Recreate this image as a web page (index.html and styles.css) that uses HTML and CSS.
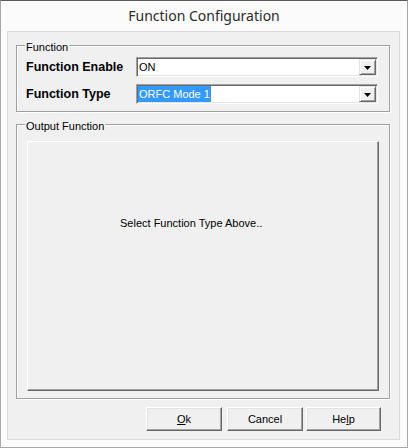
FILE: index.html
```html
<!DOCTYPE html>
<html>
<head>
<meta charset="utf-8">
<link rel="stylesheet" href="styles.css">
</head>
<body>
<div class="window">
  <div class="titlebar">Function Configuration</div>
  <div class="client">
    <div class="group g1">
      <div class="legend">Function</div>
      <div class="row">
        <span class="label">Function Enable</span>
        <div class="combo">
          <div class="value">ON</div>
          <div class="drop"><svg width="7" height="4" viewBox="0 0 7 4"><path d="M0 0h7L3.5 4z" fill="#000"/></svg></div>
        </div>
      </div>
      <div class="row row2">
        <span class="label">Function Type</span>
        <div class="combo">
          <div class="value"><span class="sel">ORFC Mode 1</span></div>
          <div class="drop"><svg width="7" height="4" viewBox="0 0 7 4"><path d="M0 0h7L3.5 4z" fill="#000"/></svg></div>
        </div>
      </div>
    </div>
    <div class="group g2">
      <div class="legend">Output Function</div>
      <div class="panel">Select Function Type Above..</div>
    </div>
    <div class="buttons">
      <button class="btn btn-ok"><u>O</u>k</button>
      <button class="btn btn-cancel">Cancel</button>
      <button class="btn btn-help">He<u>l</u>p</button>
    </div>
  </div>
</div>
</body>
</html>
```
FILE: styles.css
```css
* { box-sizing: border-box; }
body {
  margin: 0;
  font-family: "Liberation Sans", Arial, sans-serif;
  font-size: 11px;
  color: #000;
}
.window {
  width: 408px;
  height: 448px;
  border: 1px solid #a8a8a8;
  border-top-color: #5a5a5a;
  background: #fbfbfb;
  display: flex;
  flex-direction: column;
}
.titlebar {
  height: 30px;
  line-height: 30px;
  text-align: center;
  font-family: "Noto Sans", sans-serif;
  font-size: 14px;
  color: #2b2b2b;
}
.client {
  flex: 1;
  margin: 0 7px 7px 6px;
  border: 1px solid #dadada;
  background: #f0f0f0;
  padding: 13px 0 0 8px;
}
.group {
  width: 374px;
  border: 1px solid #a0a0a0;
  box-shadow: inset 1px 1px 0 #fff, 1px 1px 0 #fff;
}
.legend {
  display: table;
  margin: -5px 0 3px 8px;
  padding: 0 1px;
  line-height: 13px;
  background: #f0f0f0;
}
.g1 { padding-bottom: 7px; }
.row {
  display: flex;
  align-items: center;
  height: 20px;
  margin-left: 9px;
}
.row2 { margin-top: 7px; }
.label {
  width: 110px;
  font-weight: bold;
  font-size: 12.5px;
}
.combo {
  width: 242px;
  height: 20px;
  display: flex;
  background: #fff;
  border-top: 1px solid #a0a0a0;
  border-left: 1px solid #a0a0a0;
  border-right: 1px solid #fff;
  border-bottom: 1px solid #fff;
  box-shadow: inset 1px 1px 0 #696969, inset -1px -1px 0 #e3e3e3;
  padding: 1px;
}
.value {
  flex: 1;
  height: 16px;
  line-height: 16px;
  padding-left: 1px;
}
.sel {
  display: inline-block;
  height: 16px;
  margin-left: -1px;
  padding: 0 1px;
  background: #3399ff;
  color: #fff;
}
.drop {
  width: 17px;
  height: 16px;
  background: #f0f0f0;
  border-top: 1px solid #e3e3e3;
  border-left: 1px solid #e3e3e3;
  border-right: 1px solid #696969;
  border-bottom: 1px solid #696969;
  box-shadow: inset 1px 1px 0 #fff, inset -1px -1px 0 #a0a0a0;
  display: flex;
  align-items: center;
  justify-content: center;
  padding-top: 1px;
}
.drop svg { display: block; }
.g2 {
  margin-top: 12px;
  padding-bottom: 7px;
}
.panel {
  width: 352px;
  height: 250px;
  margin: 8px 0 0 10px;
  border-top: 1px solid #fff;
  border-left: 1px solid #fff;
  border-right: 1px solid #696969;
  border-bottom: 1px solid #696969;
  box-shadow: inset -1px -1px 0 #a0a0a0;
  padding: 75px 0 0 92px;
  line-height: 13px;
}
.buttons {
  display: flex;
  margin-top: 8px;
  padding-left: 130px;
}
.btn {
  height: 24px;
  width: 76px;
  margin: 0;
  padding: 0;
  font-family: "Liberation Sans", Arial, sans-serif;
  font-size: 11px;
  color: #000;
  background: #f0f0f0;
  border-top: 1px solid #fff;
  border-left: 1px solid #fff;
  border-right: 1px solid #696969;
  border-bottom: 1px solid #696969;
  box-shadow: inset -1px -1px 0 #a0a0a0, inset 1px 1px 0 #e3e3e3;
  border-radius: 0;
}
.btn-cancel { margin-left: 5px; }
.btn-help { margin-left: 3px; width: 75px; }
```
